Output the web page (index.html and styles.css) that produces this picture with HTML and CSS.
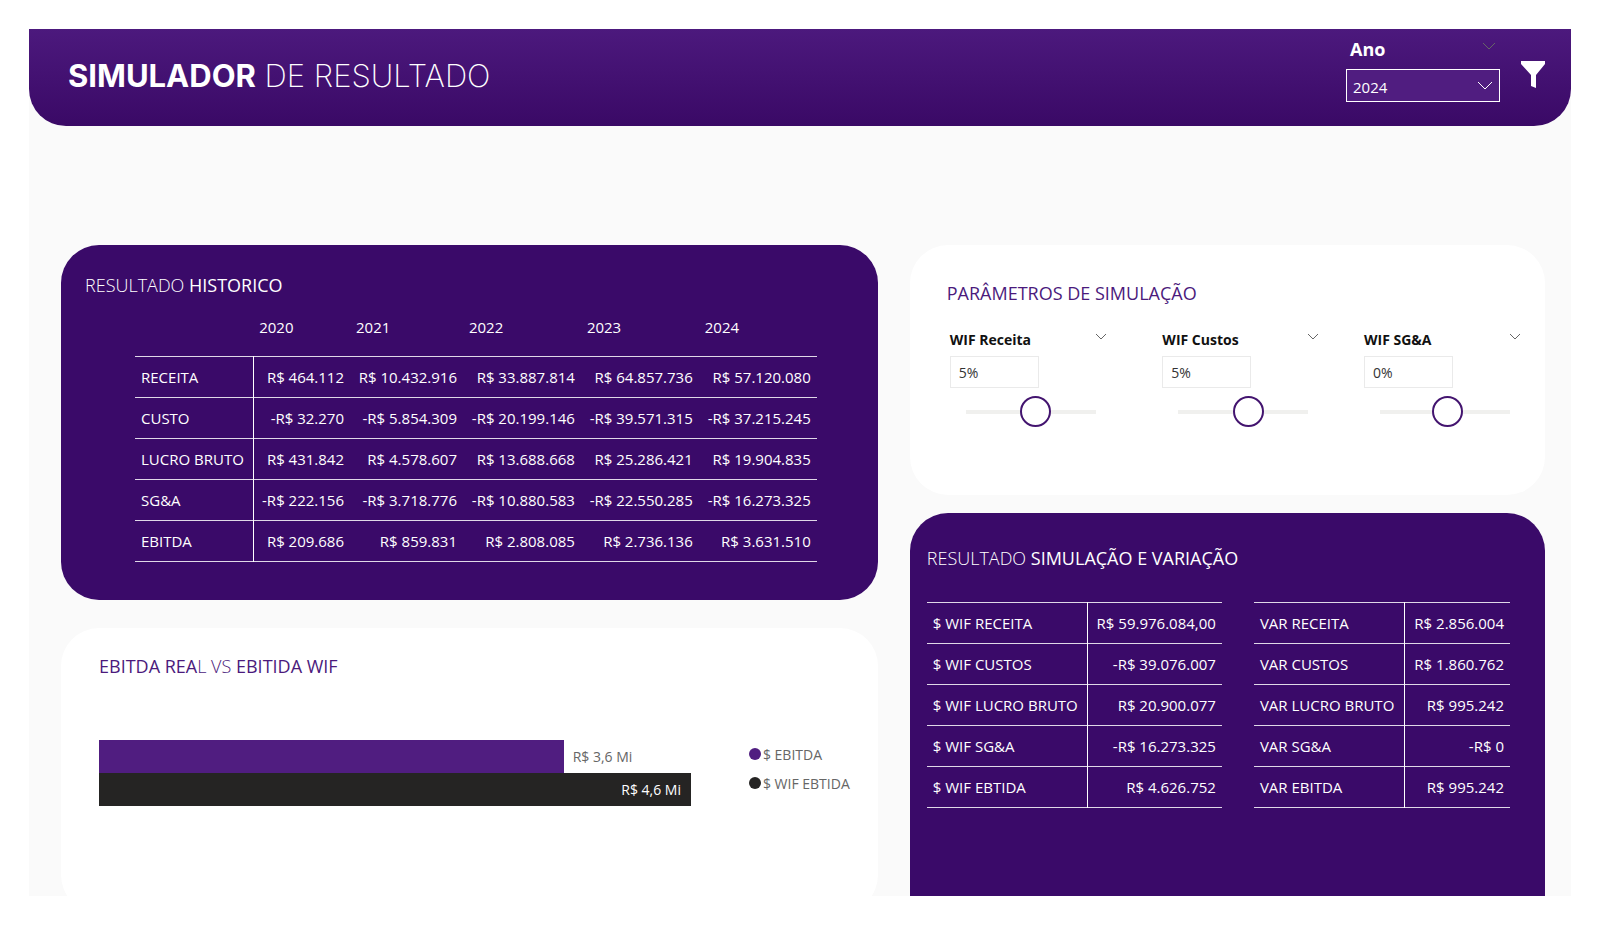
FILE: index.html
```
<!DOCTYPE html>
<html lang="pt-BR">
<head>
    <meta charset="UTF-8">
    <meta name="viewport" content="width=device-width, initial-scale=1.0">
    <title>Simulador de Resultado</title>
    <link rel="stylesheet" href="styles.css">
</head>
<body>
    <div class="report">
        <header class="header">
            <h1><b>SIMULADOR</b> DE RESULTADO</h1>
            <div class="filters">
                <div class="year-filter">
                    <div class="year-head">
                        <label for="ano">Ano</label>
                        <button class="icon-button" type="button" aria-label="Opções de Ano">
                            <svg width="14" height="8" viewBox="0 0 14 8"><path d="M1 1l6 6 6-6"/></svg>
                        </button>
                    </div>
                    <div class="select-box">
                        <select id="ano">
                            <option>2020</option>
                            <option>2021</option>
                            <option>2022</option>
                            <option>2023</option>
                            <option selected>2024</option>
                        </select>
                        <svg class="select-arrow" width="16" height="9" viewBox="0 0 16 9"><path d="M1 1l7 7 7-7"/></svg>
                    </div>
                </div>
                <button class="filter-button" type="button" aria-label="Filtros">
                    <svg width="24" height="28" viewBox="0 0 24 28"><path d="M0 0h24v3l-9 11v13l-5-2V14L0 3z"/></svg>
                </button>
            </div>
        </header>

        <main class="content">
            <div class="column column-left">
                <section class="card dark history">
                    <h2>RESULTADO <b>HISTORICO</b></h2>
                    <table class="data-table history-table">
                        <thead>
                            <tr><td></td><th>2020</th><th>2021</th><th>2022</th><th>2023</th><th>2024</th></tr>
                        </thead>
                        <tbody>
                            <tr><th>RECEITA</th><td>R$ 464.112</td><td>R$ 10.432.916</td><td>R$ 33.887.814</td><td>R$ 64.857.736</td><td>R$ 57.120.080</td></tr>
                            <tr><th>CUSTO</th><td>-R$ 32.270</td><td>-R$ 5.854.309</td><td>-R$ 20.199.146</td><td>-R$ 39.571.315</td><td>-R$ 37.215.245</td></tr>
                            <tr><th>LUCRO BRUTO</th><td>R$ 431.842</td><td>R$ 4.578.607</td><td>R$ 13.688.668</td><td>R$ 25.286.421</td><td>R$ 19.904.835</td></tr>
                            <tr><th>SG&amp;A</th><td>-R$ 222.156</td><td>-R$ 3.718.776</td><td>-R$ 10.880.583</td><td>-R$ 22.550.285</td><td>-R$ 16.273.325</td></tr>
                            <tr><th>EBITDA</th><td>R$ 209.686</td><td>R$ 859.831</td><td>R$ 2.808.085</td><td>R$ 2.736.136</td><td>R$ 3.631.510</td></tr>
                        </tbody>
                    </table>
                </section>

                <section class="card chart">
                    <h2><b>EBITDA REA</b>L VS <b>EBITIDA WIF</b></h2>
                    <div class="chart-body">
                        <div class="plot">
                            <div class="bar-row">
                                <div class="bar bar-real" style="width: 78.5%"></div>
                                <span class="bar-label">R$ 3,6 Mi</span>
                            </div>
                            <div class="bar-row">
                                <div class="bar bar-wif" style="width: 100%">R$ 4,6 Mi</div>
                            </div>
                        </div>
                        <ul class="legend">
                            <li><span class="dot dot-real"></span>$ EBITDA</li>
                            <li><span class="dot dot-wif"></span>$ WIF EBTIDA</li>
                        </ul>
                    </div>
                </section>
            </div>

            <div class="column column-right">
                <section class="card params">
                    <h2><b>PARÂMETROS DE SIMULAÇÃO</b></h2>
                    <div class="slicers">
                        <div class="slicer">
                            <div class="slicer-head">
                                <label for="wif-receita">WIF Receita</label>
                                <button class="icon-button" type="button" aria-label="Opções de WIF Receita">
                                    <svg width="12" height="7" viewBox="0 0 12 7"><path d="M1 1l5 5 5-5"/></svg>
                                </button>
                            </div>
                            <input class="slicer-value" type="text" id="wif-receita" value="5%">
                            <input class="slicer-range" type="range" min="-100" max="90" value="5" aria-label="WIF Receita">
                        </div>
                        <div class="slicer">
                            <div class="slicer-head">
                                <label for="wif-custos">WIF Custos</label>
                                <button class="icon-button" type="button" aria-label="Opções de WIF Custos">
                                    <svg width="12" height="7" viewBox="0 0 12 7"><path d="M1 1l5 5 5-5"/></svg>
                                </button>
                            </div>
                            <input class="slicer-value" type="text" id="wif-custos" value="5%">
                            <input class="slicer-range" type="range" min="-100" max="90" value="5" aria-label="WIF Custos">
                        </div>
                        <div class="slicer">
                            <div class="slicer-head">
                                <label for="wif-sga">WIF SG&amp;A</label>
                                <button class="icon-button" type="button" aria-label="Opções de WIF SG&amp;A">
                                    <svg width="12" height="7" viewBox="0 0 12 7"><path d="M1 1l5 5 5-5"/></svg>
                                </button>
                            </div>
                            <input class="slicer-value" type="text" id="wif-sga" value="0%">
                            <input class="slicer-range" type="range" min="-100" max="90" value="0" aria-label="WIF SG&amp;A">
                        </div>
                    </div>
                </section>

                <section class="card dark simulation">
                    <h2>RESULTADO <b>SIMULAÇÃO E VARIAÇÃO</b></h2>
                    <div class="tables">
                        <table class="data-table">
                            <tbody>
                                <tr><th>$ WIF RECEITA</th><td>R$ 59.976.084,00</td></tr>
                                <tr><th>$ WIF CUSTOS</th><td>-R$ 39.076.007</td></tr>
                                <tr><th>$ WIF LUCRO BRUTO</th><td>R$ 20.900.077</td></tr>
                                <tr><th>$ WIF SG&amp;A</th><td>-R$ 16.273.325</td></tr>
                                <tr><th>$ WIF EBTIDA</th><td>R$ 4.626.752</td></tr>
                            </tbody>
                        </table>
                        <table class="data-table">
                            <tbody>
                                <tr><th>VAR RECEITA</th><td>R$ 2.856.004</td></tr>
                                <tr><th>VAR CUSTOS</th><td>R$ 1.860.762</td></tr>
                                <tr><th>VAR LUCRO BRUTO</th><td>R$ 995.242</td></tr>
                                <tr><th>VAR SG&amp;A</th><td>-R$ 0</td></tr>
                                <tr><th>VAR EBITDA</th><td>R$ 995.242</td></tr>
                            </tbody>
                        </table>
                    </div>
                </section>
            </div>
        </main>
    </div>

    <script>
        // keep each text box in step with its slider
        var slicers = document.getElementsByClassName('slicer');
        for (var i = 0; i < slicers.length; i++) {
            bindSlicer(slicers[i]);
        }

        function bindSlicer(slicer) {
            var value = slicer.querySelector('.slicer-value');
            var range = slicer.querySelector('.slicer-range');

            range.addEventListener('input', function () {
                value.value = range.value + '%';
            });
            value.addEventListener('change', function () {
                range.value = parseInt(value.value, 10) || 0;
                value.value = range.value + '%';
            });
        }
    </script>
</body>
</html>
```
FILE: styles.css
```
* {
    box-sizing: border-box;
}

body {
    margin: 0;
    padding: 29px;
    background-color: #fff;
    font-family: 'Open Sans', 'Noto Sans', sans-serif;
    font-size: 15px;
    color: #252423;
}

h1, h2 {
    margin: 0;
    font-weight: 300;
}

button, input, select {
    font-family: inherit;
}

.report {
    display: flex;
    flex-direction: column;
    min-height: calc(100vh - 58px);
    background-color: #fafafa;
    overflow: hidden;
}

/* Header */
.header {
    display: flex;
    justify-content: space-between;
    align-items: center;
    height: 97px;
    padding: 0 26px 5px 39px;
    border-radius: 0 0 37px 37px;
    background: linear-gradient(#4c197d, #3a0966);
    color: #fff;
}

.header h1 {
    font-family: 'Inter', sans-serif;
    font-size: 31px;
    font-weight: 200;
}

.header h1 b {
    font-weight: 700;
}

.filters {
    display: flex;
    align-items: center;
    gap: 21px;
}

.year-filter {
    width: 154px;
    padding-bottom: 12px;
}

.year-head {
    display: flex;
    justify-content: space-between;
    align-items: flex-start;
    height: 33px;
    padding: 0 4px;
    font-size: 18px;
    font-weight: 700;
    line-height: 26px;
}

.icon-button {
    display: flex;
    padding: 6px 0;
    border: none;
    background: none;
    cursor: pointer;
}

.icon-button path {
    fill: none;
    stroke: #666;
}

.select-box {
    position: relative;
}

.select-box select {
    display: block;
    width: 100%;
    height: 33px;
    padding: 2px 6px 0;
    border: 1px solid #fff;
    border-radius: 0;
    background-color: #501d80;
    color: #fff;
    font-size: 15px;
    appearance: none;
}

.select-arrow {
    position: absolute;
    top: 12px;
    right: 7px;
    fill: none;
    stroke: #fff;
    pointer-events: none;
}

.filter-button {
    display: flex;
    padding: 0;
    border: none;
    background: none;
    cursor: pointer;
}

.filter-button path {
    fill: #fff;
}

/* Cards */
.content {
    flex: 1;
    display: grid;
    grid-template-columns: 9fr 7fr;
    gap: 32px;
    padding: 119px 26px 0 32px;
}

.column {
    display: flex;
    flex-direction: column;
    min-width: 0;
}

/* the chart card runs past the bottom edge of the report */
.column-left {
    gap: 28px;
    margin-bottom: -17px;
}

.column-right {
    gap: 18px;
}

.card {
    border-radius: 38px;
    background-color: #fff;
    color: #4b1a7c;
}

.card h2 {
    font-size: 18px;
    line-height: 26px;
}

.card h2 b {
    font-weight: 400;
}

.dark {
    background-color: #3a0a69;
    color: #fff;
}

/* Tables */
.data-table {
    width: 100%;
    border-collapse: collapse;
    white-space: nowrap;
}

.data-table th,
.data-table td {
    height: 41px;
    padding: 0 6px;
    font-weight: 400;
}

.data-table th {
    text-align: left;
}

.data-table td {
    text-align: right;
}

.data-table tbody tr {
    border-top: 1px solid #e0d8e8;
    border-bottom: 1px solid #e0d8e8;
}

.data-table tbody th {
    border-right: 1px solid #fff;
}

.history {
    padding: 27px 61px 38px 24px;
}

.history-table {
    width: calc(100% - 50px);
    margin-left: 50px;
}

.history-table thead th {
    height: 58px;
}

/* Chart */
.chart {
    flex: 1;
    padding: 25px 28px 100px 38px;
}

.chart-body {
    display: flex;
    gap: 58px;
    padding-top: 61px;
}

.plot {
    flex: 1;
}

.bar-row {
    display: flex;
    align-items: center;
    gap: 9px;
    height: 33px;
    font-size: 14px;
}

.bar {
    height: 100%;
}

.bar-real {
    background-color: #501d80;
}

.bar-wif {
    padding-right: 10px;
    background-color: #252423;
    color: #fff;
    line-height: 33px;
    text-align: right;
}

.bar-label {
    color: #666;
}

.legend {
    margin: 0;
    padding: 0;
    list-style: none;
    color: #666;
    font-size: 14px;
    line-height: 29px;
}

.legend li {
    display: flex;
    align-items: center;
    gap: 2px;
}

.dot {
    width: 12px;
    height: 12px;
    border-radius: 50%;
}

.dot-real {
    background-color: #501d80;
}

.dot-wif {
    background-color: #252423;
}

/* Simulation parameters */
.params {
    padding: 35px 24px 67px 37px;
}

.slicers {
    display: grid;
    grid-template-columns: 213fr 202fr 157fr;
    padding: 24px 0 0 3px;
}

.slicer {
    width: 157px;
}

.slicer-head {
    display: flex;
    justify-content: space-between;
    align-items: flex-start;
    height: 26px;
    color: #111;
    font-size: 14px;
    font-weight: 700;
    line-height: 20px;
}

.slicer-head .icon-button {
    padding: 3px 0;
}

.slicer-value {
    display: block;
    width: 89px;
    height: 32px;
    padding: 0 8px;
    border: 1px solid #eaeaea;
    background-color: #fff;
    color: #333;
    font-size: 14px;
}

.slicer-range {
    display: block;
    width: 130px;
    height: 32px;
    margin: 8px 0 0 16px;
    background: none;
    appearance: none;
}

.slicer-range::-webkit-slider-runnable-track {
    height: 4px;
    background-color: #f0f0ee;
}

.slicer-range::-webkit-slider-thumb {
    width: 31px;
    height: 31px;
    margin-top: -14px;
    border: 2px solid #43146f;
    border-radius: 50%;
    background-color: #fff;
    appearance: none;
}

/* Simulation result */
.simulation {
    flex: 1;
    padding: 32px 35px 80px 17px;
    border-radius: 38px 38px 0 0;
}

.tables {
    display: grid;
    grid-template-columns: 295fr 256fr;
    gap: 32px;
    padding-top: 31px;
}

@media screen and (max-width: 1100px) {
    .content {
        grid-template-columns: 1fr;
    }

    .column-left {
        margin-bottom: 0;
    }
}
```
